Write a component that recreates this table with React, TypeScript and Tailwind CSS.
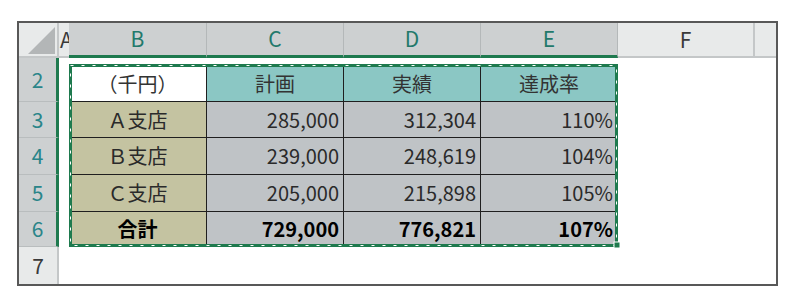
const FONT = { fontFamily: '"Noto Sans CJK JP", "Noto Sans", sans-serif' };

const cols = ["B", "C", "D", "E"];

type Row = { num: string; label: string; values: string[]; bold?: boolean };

const rows: Row[] = [
  { num: "3", label: "Ａ支店", values: ["285,000", "312,304", "110%"] },
  { num: "4", label: "Ｂ支店", values: ["239,000", "248,619", "104%"] },
  { num: "5", label: "Ｃ支店", values: ["205,000", "215,898", "105%"] },
  { num: "6", label: "合計", values: ["729,000", "776,821", "107%"], bold: true },
];

function ColHeader({ letter }: { letter: string }) {
  return (
    <div className="flex items-center justify-center bg-[#cdd0d1] border-r border-[#b4b8b9] border-b-[3px] border-b-[#1f7a4f] text-[21px] text-[#22796b]">
      {letter}
    </div>
  );
}

function RowHeader({ num }: { num: string }) {
  return (
    <div className="flex items-center justify-center bg-[#cdd0d1] border-b border-[#b9bdbe] border-r-[3px] border-r-[#1f7a4f] text-[21px] text-[#2a8589]">
      {num}
    </div>
  );
}

// marching-ants border over B2:E6 (absolute grid child, so it takes no cells)
function Selection() {
  return (
    <div className="absolute col-start-3 col-end-7 row-start-2 row-end-7 left-0 right-0 top-[6px] bottom-0 z-10 pointer-events-none">
      <svg width="549" height="183" className="absolute left-0 top-0 overflow-visible">
        <rect x="1.5" y="1.5" width="546" height="180" fill="none" stroke="#1e7a4e" strokeWidth="3" />
        <rect
          x="1.5"
          y="1.5"
          width="546"
          height="180"
          fill="none"
          stroke="#ffffff"
          strokeWidth="1"
          strokeDasharray="3 8"
        />
        <rect x="545" y="178" width="6" height="6" fill="#1e7a4e" stroke="#ffffff" strokeWidth="1" />
      </svg>
    </div>
  );
}

export default function App() {
  return (
    <div className="w-[800px] h-[308px] bg-white pt-[21px] pl-[17px]" style={FONT}>
      <div className="w-[761px] h-[265px] border-2 border-[#585858] bg-white overflow-hidden">
        <div className="relative grid grid-cols-[40px_10px_138px_137px_137px_137px_137px_1fr] grid-rows-[35px_44px_36px_37px_37px_35px_1fr] h-full">
          {/* corner */}
          <div className="bg-[#e8eaea] border-r-2 border-[#c4c7c8] border-b-2 border-b-[#c4c7c8] relative">
            <svg width="40" height="35" className="absolute left-0 top-0">
              <polygon points="9,31 36,4 36,31" fill="#b3b6b7" />
            </svg>
          </div>
          {/* column A, clipped */}
          <div className="bg-[#e8eaea] border-b-2 border-[#c4c7c8] overflow-hidden flex items-center text-[21px] text-[#3a3a3a] pl-[1px]">
            <span className="leading-none">A</span>
          </div>
          {cols.map((c) => (
            <ColHeader key={c} letter={c} />
          ))}
          <div className="flex items-center justify-center bg-[#e8eaea] border-r-2 border-[#c4c7c8] border-b-2 border-b-[#c4c7c8] text-[21px] text-[#3a3a3a]">
            F
          </div>
          <div className="bg-[#e8eaea] border-b-2 border-[#c4c7c8]" />

          {/* row 2 */}
          <RowHeader num="2" />
          <div />
          <div className="pt-[8px]">
            <div className="h-full bg-white border-r border-b border-[#1f1f1f] flex items-center justify-center text-[20px] text-[#333]">
              （千円）
            </div>
          </div>
          {["計画", "実績", "達成率"].map((t) => (
            <div key={t} className="pt-[8px]">
              <div className="h-full bg-[#8bc7c4] border-r border-b border-[#1f1f1f] flex items-center justify-center text-[20px] text-[#333]">
                {t}
              </div>
            </div>
          ))}
          <div />
          <div />

          {rows.map((r) => (
            <div key={r.num} className="contents">
              <RowHeader num={r.num} />
              <div />
              <div
                className={`bg-[#c4c3a1] border-r border-b border-[#1f1f1f] flex items-center justify-center text-[20px] ${
                  r.bold ? "font-bold text-black" : "text-[#2a2a2a]"
                }`}
              >
                {r.label}
              </div>
              {r.values.map((v, i) => (
                <div
                  key={i}
                  className={`bg-[#bfc3c6] border-r border-b border-[#1f1f1f] flex items-center justify-end pr-[4px] text-[20px] ${
                    r.bold ? "font-bold text-black" : "text-[#2a2a2a]"
                  }`}
                >
                  {v}
                </div>
              ))}
              <div />
              <div />
            </div>
          ))}

          {/* row 7 */}
          <div className="flex items-center justify-center bg-[#e8eaea] border-r-2 border-[#c4c7c8] text-[21px] text-[#3a3a3a]">
            7
          </div>
          <div />
          <div />
          <div />
          <div />
          <div />
          <div />
          <div />

          <Selection />
        </div>
      </div>
    </div>
  );
}
